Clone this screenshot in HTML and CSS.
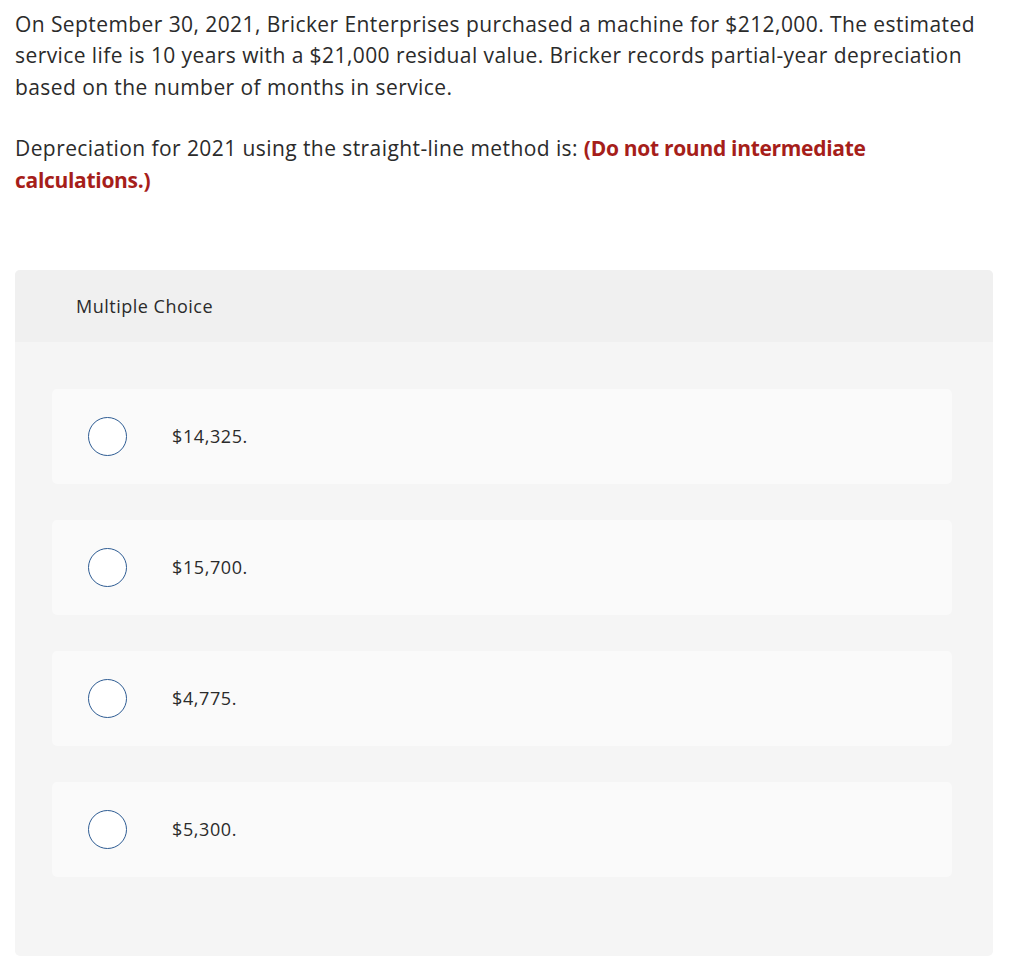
FILE: index.html
```html
<!DOCTYPE html>
<html>
<head>
<meta charset="utf-8">
<link rel="stylesheet" href="styles.css">
</head>
<body>
<div class="page">
  <p class="q">On September 30, 2021, Bricker Enterprises purchased a machine for $212,000. The estimated service life is 10 years with a $21,000 residual value. Bricker records partial-year depreciation based on the number of months in service.</p>
  <p class="q second">Depreciation for 2021 using the straight-line method is: <strong class="hint">(Do not round intermediate calculations.)</strong></p>
  <div class="panel">
    <div class="panel-head">Multiple Choice</div>
    <div class="options">
      <div class="option"><span class="radio"></span><span class="label">$14,325.</span></div>
      <div class="option"><span class="radio"></span><span class="label">$15,700.</span></div>
      <div class="option"><span class="radio"></span><span class="label">$4,775.</span></div>
      <div class="option"><span class="radio"></span><span class="label">$5,300.</span></div>
    </div>
  </div>
</div>
</body>
</html>
```

FILE: styles.css
```css
html, body {
  margin: 0;
  padding: 0;
  background: #ffffff;
}
body {
  font-family: "Open Sans", "Liberation Sans", sans-serif;
  color: #2b2b2b;
}
.page {
  padding: 9px 31px 0 15px;
}
.q {
  margin: 0;
  font-size: 21px;
  line-height: 31.3px;
  letter-spacing: 0.42px;
}
.second {
  margin-top: 30.5px;
}
.hint {
  color: #a61e1a;
  font-weight: 700;
  letter-spacing: -0.3px;
}
.panel {
  margin-top: 74px;
  background: #f5f5f5;
  border-radius: 5px;
  height: 686px;
  overflow: hidden;
}
.panel-head {
  background: #f0f0f0;
  height: 72px;
  padding-left: 61px;
  display: flex;
  align-items: center;
  font-size: 18px;
  letter-spacing: 0.5px;
}
.options {
  padding: 47px 41px 0 37px;
  display: flex;
  flex-direction: column;
  gap: 36px;
}
.option {
  background: #fafafa;
  border-radius: 5px;
  height: 95px;
  display: flex;
  align-items: center;
  padding-left: 36px;
}
.radio {
  width: 37px;
  height: 37px;
  border: 1.5px solid #2e5c93;
  border-radius: 50%;
  background: #ffffff;
  flex: none;
}
.label {
  margin-left: 45px;
  font-size: 18px;
  letter-spacing: 0.6px;
}
```
